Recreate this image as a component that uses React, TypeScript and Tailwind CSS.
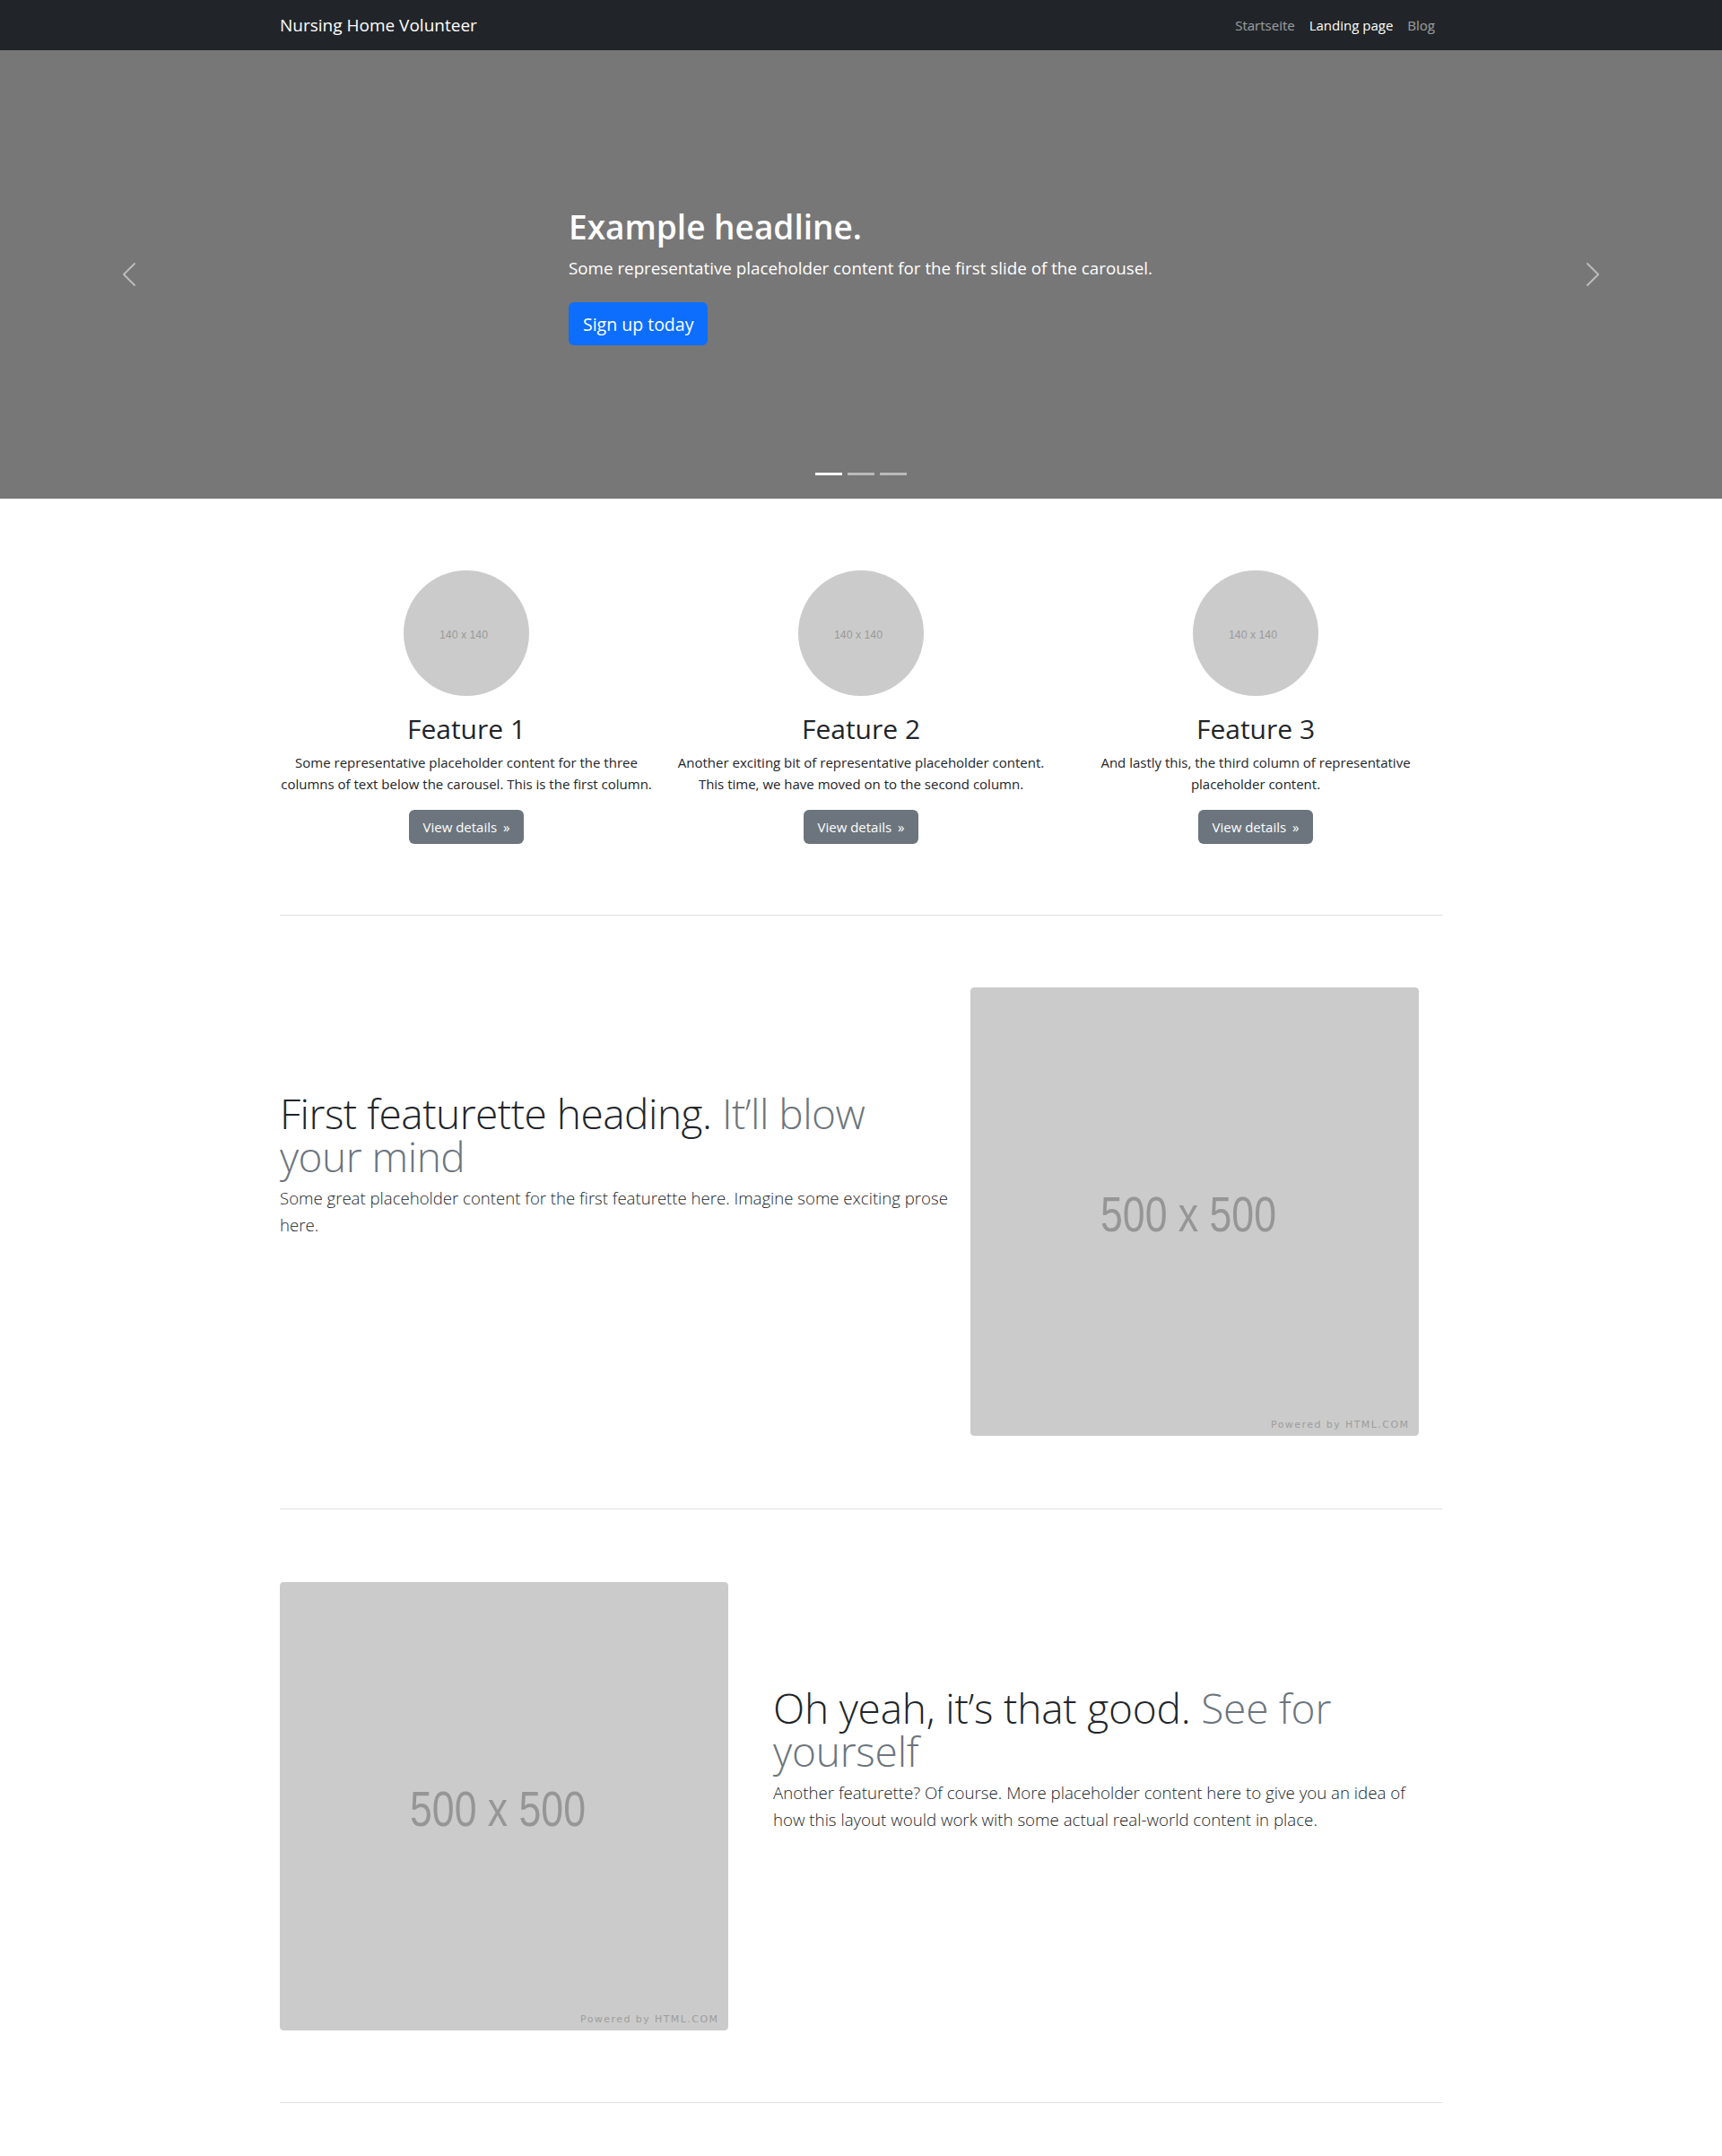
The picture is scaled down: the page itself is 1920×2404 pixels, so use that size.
import React from 'react';

const font = { fontFamily: '"Open Sans", "Noto Sans", sans-serif' };

const prevPath =
  'M11.354 1.646a.5.5 0 0 1 0 .708L5.707 8l5.647 5.646a.5.5 0 0 1-.708.708l-6-6a.5.5 0 0 1 0-.708l6-6a.5.5 0 0 1 .708 0z';
const nextPath =
  'M4.646 1.646a.5.5 0 0 1 .708 0l6 6a.5.5 0 0 1 0 .708l-6 6a.5.5 0 0 1-.708-.708L10.293 8 4.646 2.354a.5.5 0 0 1 0-.708z';

const features = [
  {
    title: 'Feature 1',
    lines: ['Some representative placeholder content for the three', 'columns of text below the carousel. This is the first column.'],
  },
  {
    title: 'Feature 2',
    lines: ['Another exciting bit of representative placeholder content.', 'This time, we have moved on to the second column.'],
  },
  {
    title: 'Feature 3',
    lines: ['And lastly this, the third column of representative', 'placeholder content.'],
  },
];

function CirclePlaceholder() {
  return (
    <svg width="140" height="140" viewBox="0 0 140 140" className="block">
      <circle cx="70" cy="70" r="70" fill="#cbcbcb" />
      <text
        x="40"
        y="76"
        fontSize="13"
        fill="#9a9a9a"
        textLength="54"
        lengthAdjust="spacingAndGlyphs"
        fontFamily='"Liberation Sans", Arial, sans-serif'
      >
        140 x 140
      </text>
    </svg>
  );
}

function BigPlaceholder() {
  return (
    <svg width="500" height="500" viewBox="0 0 500 500" className="block rounded-[4px]">
      <rect width="500" height="500" rx="4" fill="#cbcbcb" />
      <text
        x="145"
        y="272"
        fontSize="55"
        fill="#969696"
        textLength="196"
        lengthAdjust="spacingAndGlyphs"
        fontFamily='"Liberation Sans", Arial, sans-serif'
      >
        500 x 500
      </text>
      <text
        x="335"
        y="491"
        fontSize="11"
        fill="#9d9d9d"
        textLength="153"
        lengthAdjust="spacing"
        fontFamily='"DejaVu Sans", Verdana, sans-serif'
      >
        Powered by HTML.COM
      </text>
    </svg>
  );
}

export default function App() {
  return (
    <div className="bg-white text-[#212529] pb-[80px]" style={font}>
      {/* navbar */}
      <nav className="h-[56px] bg-[#212529]">
        <div className="w-[1296px] mx-auto h-full flex items-center justify-between">
          <span className="text-[19px] text-white">Nursing Home Volunteer</span>
          <div className="flex items-center text-[15px]">
            <span className="px-2 text-white/55">Startseite</span>
            <span className="px-2 text-white">Landing page</span>
            <span className="px-2 text-white/55">Blog</span>
          </div>
        </div>
      </nav>

      {/* carousel */}
      <div className="relative h-[500px] bg-[#777777]">
        <div className="pl-[634px] pt-[175px] flex flex-col items-start text-white">
          <h1 className="text-[37px] font-semibold leading-[1.2] mb-[10px]">Example headline.</h1>
          <p className="text-[18.8px] leading-[28px] mb-[24px]">
            Some representative placeholder content for the first slide of the carousel.
          </p>
          <button className="h-[48px] px-4 rounded-[6px] bg-[#0d6efd] text-[19.5px] text-white">Sign up today</button>
        </div>
        <div className="absolute left-0 top-0 bottom-0 w-[15%] flex items-center justify-center">
          <svg width="32" height="32" viewBox="0 0 16 16" fill="#fff" className="opacity-50">
            <path d={prevPath} />
          </svg>
        </div>
        <div className="absolute right-0 top-0 bottom-0 w-[15%] flex items-center justify-center">
          <svg width="32" height="32" viewBox="0 0 16 16" fill="#fff" className="opacity-50">
            <path d={nextPath} />
          </svg>
        </div>
        <div className="absolute left-0 right-0 bottom-[26px] flex justify-center">
          <span className="mx-[3px] w-[30px] h-[3px] bg-white" />
          <span className="mx-[3px] w-[30px] h-[3px] bg-white/50" />
          <span className="mx-[3px] w-[30px] h-[3px] bg-white/50" />
        </div>
      </div>

      {/* three columns */}
      <div className="w-[1320px] mx-auto pt-[80px] grid grid-cols-3">
        {features.map((f) => (
          <div key={f.title} className="px-3 flex flex-col items-center text-center">
            <CirclePlaceholder />
            <h2 className="mt-[19px] text-[30px] font-medium leading-[36px]">{f.title}</h2>
            <p className="mt-[7px] text-[15px] leading-[24px] whitespace-nowrap">
              {f.lines[0]}
              <br />
              {f.lines[1]}
            </p>
            <button className="mt-[17px] h-[38px] px-[15px] rounded-[6px] bg-[#6c757d] text-white text-[15px]">
              View details <span className="ml-[3px]">»</span>
            </button>
          </div>
        ))}
      </div>

      <div className="w-[1296px] mx-auto">
        <hr className="mt-[79px] border-0 border-t border-[#dfdfdf]" />

        {/* featurette 1 */}
        <div className="mt-[80px] flex">
          <div className="w-[746px] pt-[116px]">
            <h2 className="text-[46px] font-light leading-[48px] tracking-[-0.5px]">
              First featurette heading. <span className="text-[#6c757d]">It’ll blow</span>
              <br />
              <span className="text-[#6c757d]">your mind</span>
            </h2>
            <p className="mt-[8px] text-[18.6px] font-light leading-[30px] whitespace-nowrap">
              Some great placeholder content for the first featurette here. Imagine some exciting prose
              <br />
              here.
            </p>
          </div>
          <div className="ml-[24px]">
            <BigPlaceholder />
          </div>
        </div>

        <hr className="mt-[81px] border-0 border-t border-[#dfdfdf]" />

        {/* featurette 2 */}
        <div className="mt-[81px] flex">
          <div className="w-[526px]">
            <BigPlaceholder />
          </div>
          <div className="ml-[24px] w-[746px] pt-[116px]">
            <h2 className="text-[46px] font-light leading-[48px] tracking-[-0.2px]">
              Oh yeah, it’s that good. <span className="text-[#6c757d]">See for</span>
              <br />
              <span className="text-[#6c757d]">yourself</span>
            </h2>
            <p className="mt-[8px] text-[18.7px] font-light leading-[30px] whitespace-nowrap">
              Another featurette? Of course. More placeholder content here to give you an idea of
              <br />
              how this layout would work with some actual real-world content in place.
            </p>
          </div>
        </div>

        <hr className="mt-[80px] border-0 border-t border-[#dfdfdf]" />
      </div>
    </div>
  );
}
